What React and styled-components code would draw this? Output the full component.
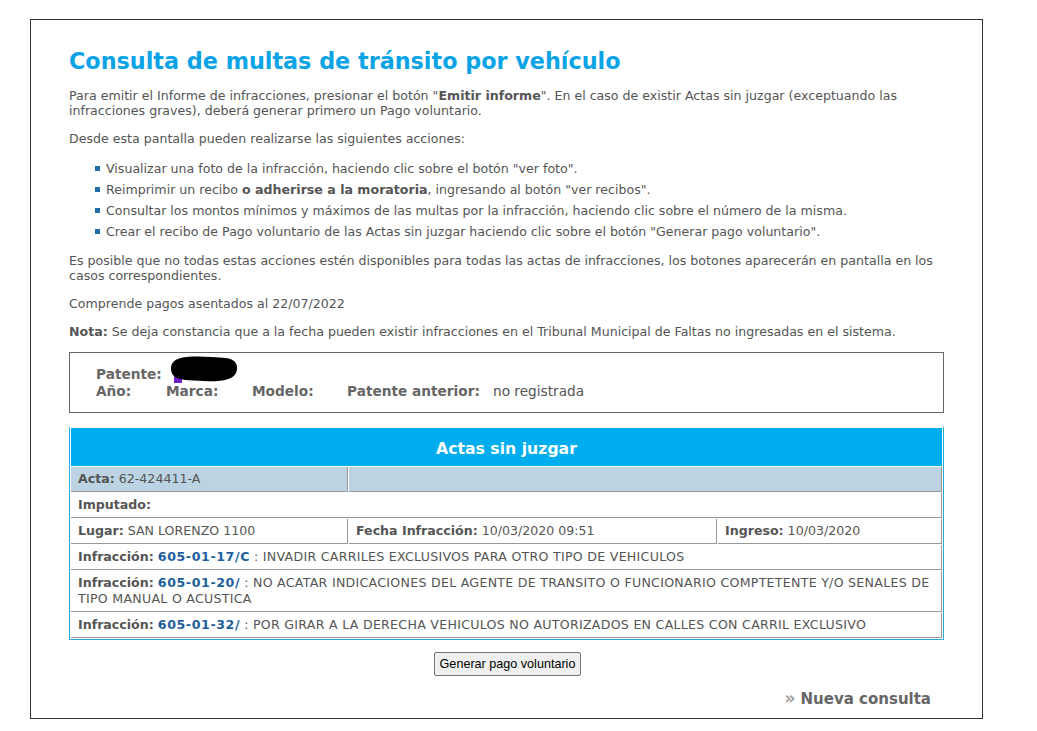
import styled, { createGlobalStyle } from "styled-components";

const GlobalStyle = createGlobalStyle`
  html, body {
    margin: 0;
    padding: 0;
    background: #fff;
  }
  body {
    font-family: "DejaVu Sans", Verdana, sans-serif;
    color: #555;
  }
`;

const Page = styled.div`
  padding: 19px 0 0 30px;
`;

const Frame = styled.div`
  width: 953px;
  height: 700px;
  box-sizing: border-box;
  border: 1px solid #333;
  padding: 27px 38px 0 38px;
`;

const Title = styled.h1`
  margin: 0 0 13px;
  font-size: 22.3px;
  line-height: 28px;
  font-weight: bold;
  color: #0aa3e6;
`;

const Text = styled.p`
  margin: 0 0 13px;
  font-size: 12.6px;
  line-height: 15px;
  b { color: #555; }
`;

const List = styled.ul`
  margin: -1px 0 11px;
  padding: 0 0 0 26px;
  list-style: none;
`;

const Item = styled.li`
  position: relative;
  padding-left: 11px;
  font-size: 12.6px;
  line-height: 21px;
  &::before {
    content: "";
    position: absolute;
    left: 0;
    top: 8px;
    width: 5px;
    height: 5px;
    background: #1f6fa8;
  }
`;

const VehicleBox = styled.div`
  width: 875px;
  box-sizing: border-box;
  border: 1px solid #666;
  margin-top: 13px;
  padding: 12px 26px 13px;
  font-size: 13.7px;
`;

const VRow = styled.div`
  display: flex;
  align-items: center;
  height: 17px;
`;

const Label = styled.b`
  color: #666;
  width: ${(p) => p.$w || "auto"};
  flex: none;
`;

const Value = styled.span`
  color: #555;
  margin-left: ${(p) => p.$ml || "0"};
`;

const Blob = styled.svg`
  margin-left: 8px;
  margin-top: -8px;
`;

const Table = styled.table`
  width: 875px;
  margin-top: 14px;
  border-collapse: separate;
  border-spacing: 1px;
  border: 1px solid #2aa8e0;
  border-top: none;
  font-size: 12.6px;
  td {
    border-right: 1px solid #999;
    border-bottom: 1px solid #999;
    padding: 4px 7px;
    line-height: 16px;
    color: #555;
    vertical-align: top;
  }
  td b { color: #555; }
`;

const HeadCell = styled.th`
  background: #00aeef;
  color: #fff;
  font-size: 15.7px;
  font-weight: bold;
  height: 36px;
  padding: 2px 0 0;
`;

const ActaRow = styled.tr`
  td { background: #bbd3e2; }
`;

const Code = styled.b`
  && { color: #1d5f9c; letter-spacing: 0.6px; }
`;

const Desc = styled.span`
  letter-spacing: 0.27px;
`;

const ButtonRow = styled.div`
  display: flex;
  justify-content: center;
  width: 877px;
  margin-top: 12px;
`;

const Button = styled.button`
  font-family: "Liberation Sans", Arial, sans-serif;
  font-size: 12.6px;
  color: #000;
  background: #efefef;
  border: 1px solid #767676;
  border-radius: 2px;
  padding: 1px 5px;
  height: 24px;
`;

const NewQuery = styled.div`
  width: 862px;
  display: flex;
  justify-content: flex-end;
  align-items: center;
  gap: 5px;
  margin-top: 14px;
  font-size: 15px;
  font-weight: bold;
  color: #666;
  span { color: #999; font-size: 17px; font-weight: bold; margin-top: -2px; }
`;

export default function App() {
  return (
    <>
      <GlobalStyle />
      <Page>
        <Frame>
          <Title>Consulta de multas de tránsito por vehículo</Title>
          <Text>
            Para emitir el Informe de infracciones, presionar el botón "<b>Emitir informe</b>". En el caso de existir Actas sin juzgar (exceptuando las infracciones graves), deberá generar primero un Pago voluntario.
          </Text>
          <Text>Desde esta pantalla pueden realizarse las siguientes acciones:</Text>
          <List>
            <Item>Visualizar una foto de la infracción, haciendo clic sobre el botón "ver foto".</Item>
            <Item>Reimprimir un recibo <b>o adherirse a la moratoria</b>, ingresando al botón "ver recibos".</Item>
            <Item>Consultar los montos mínimos y máximos de las multas por la infracción, haciendo clic sobre el número de la misma.</Item>
            <Item>Crear el recibo de Pago voluntario de las Actas sin juzgar haciendo clic sobre el botón "Generar pago voluntario".</Item>
          </List>
          <Text>
            Es posible que no todas estas acciones estén disponibles para todas las actas de infracciones, los botones aparecerán en pantalla en los casos correspondientes.
          </Text>
          <Text>Comprende pagos asentados al 22/07/2022</Text>
          <Text>
            <b>Nota:</b> Se deja constancia que a la fecha pueden existir infracciones en el Tribunal Municipal de Faltas no ingresadas en el sistema.
          </Text>

          <VehicleBox>
            <VRow>
              <Label>Patente:</Label>
              <Blob width="68" height="28" viewBox="0 0 68 28">
                <path d="M4 20 L12 21 L12 27 L4 27 Z" fill="#6a1fc2" />
                <path d="M8 3 C18 -1 40 1 56 2 C66 3 69 10 66 17 C63 24 50 26 34 25 C20 24 8 25 3 19 C-1 13 1 5 8 3 Z" fill="#000" />
              </Blob>
            </VRow>
            <VRow>
              <Label $w="70px">Año:</Label>
              <Label $w="86px">Marca:</Label>
              <Label $w="95px">Modelo:</Label>
              <Label>Patente anterior:</Label>
              <Value $ml="13px">no registrada</Value>
            </VRow>
          </VehicleBox>

          <Table>
            <thead>
              <tr>
                <HeadCell colSpan={3}>Actas sin juzgar</HeadCell>
              </tr>
            </thead>
            <tbody>
              <ActaRow>
                <td style={{ width: 262 }}><b>Acta:</b> 62-424411-A</td>
                <td colSpan={2}></td>
              </ActaRow>
              <tr>
                <td colSpan={3}><b>Imputado:</b></td>
              </tr>
              <tr>
                <td><b>Lugar:</b> SAN LORENZO 1100</td>
                <td style={{ width: 353 }}><b>Fecha Infracción:</b> 10/03/2020 09:51</td>
                <td><b>Ingreso:</b> 10/03/2020</td>
              </tr>
              <tr>
                <td colSpan={3}><b>Infracción:</b> <Code>605-01-17/C</Code> <Desc>: INVADIR CARRILES EXCLUSIVOS PARA OTRO TIPO DE VEHICULOS</Desc></td>
              </tr>
              <tr>
                <td colSpan={3}><b>Infracción:</b> <Code>605-01-20/</Code> <Desc>: NO ACATAR INDICACIONES DEL AGENTE DE TRANSITO O FUNCIONARIO COMPTETENTE Y/O SENALES DE TIPO MANUAL O ACUSTICA</Desc></td>
              </tr>
              <tr>
                <td colSpan={3}><b>Infracción:</b> <Code>605-01-32/</Code> <Desc>: POR GIRAR A LA DERECHA VEHICULOS NO AUTORIZADOS EN CALLES CON CARRIL EXCLUSIVO</Desc></td>
              </tr>
            </tbody>
          </Table>

          <ButtonRow>
            <Button>Generar pago voluntario</Button>
          </ButtonRow>
          <NewQuery><span>»</span>Nueva consulta</NewQuery>
        </Frame>
      </Page>
    </>
  );
}
